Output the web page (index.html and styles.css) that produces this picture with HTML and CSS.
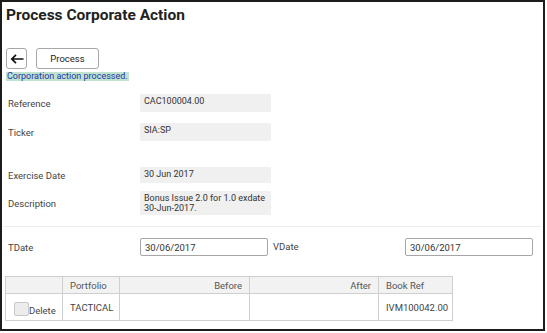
FILE: index.html
```html
<!DOCTYPE html>
<html lang="en">
<head>
    <meta charset="UTF-8">
    <title>Process Corporate Action</title>
    <link rel="stylesheet" href="styles.css">
</head>
<body>
    <div class="frame">
        <h1 class="page-title">Process Corporate Action</h1>

        <div class="toolbar">
            <button type="button" class="btn btn-back" title="Back">
                <svg width="14" height="10" viewBox="0 0 14 10"><path d="M13.5 5H1.8M6 0.9L1.8 5L6 9.1" fill="none" stroke="#111" stroke-width="1.7"/></svg>
            </button>
            <button type="button" class="btn btn-process">Process</button>
        </div>
        <div class="message"><span>Corporation action processed.</span></div>

        <div class="fields">
            <div class="field">
                <label>Reference</label>
                <div class="value">CAC100004.00</div>
            </div>
            <div class="field">
                <label>Ticker</label>
                <div class="value">SIA:SP</div>
            </div>
            <div class="field field-spaced">
                <label>Exercise Date</label>
                <div class="value value-short">30 Jun 2017</div>
            </div>
            <div class="field">
                <label>Description</label>
                <div class="value">Bonus Issue 2.0 for 1.0 exdate 30-Jun-2017.</div>
            </div>
        </div>

        <div class="dates">
            <label for="tdate">TDate</label>
            <input type="text" id="tdate" value="30/06/2017">
            <label for="vdate">VDate</label>
            <input type="text" id="vdate" value="30/06/2017">
        </div>

        <table class="grid">
            <colgroup>
                <col style="width: 57px">
                <col style="width: 57px">
                <col style="width: 130px">
                <col style="width: 129px">
                <col style="width: 74px">
            </colgroup>
            <thead>
                <tr>
                    <th></th>
                    <th>Portfolio</th>
                    <th class="col-num">Before</th>
                    <th class="col-num">After</th>
                    <th>Book Ref</th>
                </tr>
            </thead>
            <tbody>
                <tr>
                    <td class="col-del"><span class="check"></span>Delete</td>
                    <td>TACTICAL</td>
                    <td class="col-num"></td>
                    <td class="col-num"></td>
                    <td>IVM100042.00</td>
                </tr>
            </tbody>
        </table>
    </div>
</body>
</html>
```

FILE: styles.css
```css
* {
    box-sizing: border-box;
    margin: 0;
    padding: 0;
}

body {
    font-family: Roboto, "Liberation Sans", Arial, sans-serif;
    background-color: #fff;
    color: #444;
}

/* Window frame */
.frame {
    width: 545px;
    height: 331px;
    border: 2px solid #1c1c1c;
    padding: 0 2px;
}

.page-title {
    margin: 4px 0 0 2px;
    font-size: 15.5px;
    line-height: 18px;
    font-weight: bold;
    color: #222;
}

/* Toolbar */
.toolbar {
    display: flex;
    gap: 9px;
    margin: 24px 0 0 2px;
}

.btn {
    height: 21px;
    background-color: #fff;
    border: 1px solid #a8a8a8;
    border-radius: 3px;
    font-family: inherit;
    font-size: 9.5px;
    color: #222;
}

.btn-back {
    width: 21px;
    display: flex;
    align-items: center;
    justify-content: center;
}

.btn-process {
    width: 63px;
}

.message {
    margin: 3px 0 0 2px;
    font-size: 9px;
    line-height: 9px;
}

.message span {
    display: inline-block;
    padding: 0 1px;
    background-color: #c0e3cf;
    color: #2435a8;
}

/* Read-only fields */
.fields {
    margin-top: 13px;
}

.field {
    display: grid;
    grid-template-columns: 136px 131px;
    align-items: center;
    margin-bottom: 11px;
    font-size: 9.5px;
}

.field label {
    padding-left: 4px;
}

.field-spaced {
    margin-top: 26px;
    margin-bottom: 8px;
}

.value {
    min-height: 18px;
    padding: 2px 4px;
    background-color: #f0f0f0;
    color: #333;
    font-size: 9px;
    line-height: 10px;
}

.value-short {
    min-height: 16px;
}

/* Date inputs */
.dates {
    display: grid;
    grid-template-columns: 136px 128px 137px 128px;
    align-items: center;
    margin-top: 11px;
    padding-top: 11px;
    border-top: 1px solid #ececec;
    font-size: 9.5px;
}

.dates label {
    padding-left: 4px;
}

.dates label[for="vdate"] {
    padding-left: 5px;
    margin-top: -2px;
}

.dates input {
    height: 18px;
    padding: 0 4px;
    border: 1px solid #a6a6a6;
    border-radius: 2px;
    font-family: inherit;
    font-size: 9.5px;
    color: #333;
}

/* Holdings table */
.grid {
    width: 447px;
    margin: 20px 0 0 1px;
    table-layout: fixed;
    border-collapse: collapse;
    font-size: 9.5px;
    color: #444;
}

.grid th,
.grid td {
    border: 1px solid #cfcfcf;
    padding: 0 7px;
    text-align: left;
    font-weight: normal;
}

.grid th {
    height: 17px;
    background-color: #f2f2f2;
    color: #555;
}

.grid td {
    height: 27px;
}

.grid .col-num {
    text-align: right;
}

.grid .col-del {
    padding: 4px 0 0 8px;
    white-space: nowrap;
}

.check {
    display: inline-block;
    width: 15px;
    height: 14px;
    margin-bottom: -2px;
    background-color: #ececec;
    border: 1px solid #c8c8c8;
    border-radius: 2px;
    vertical-align: baseline;
}
```
